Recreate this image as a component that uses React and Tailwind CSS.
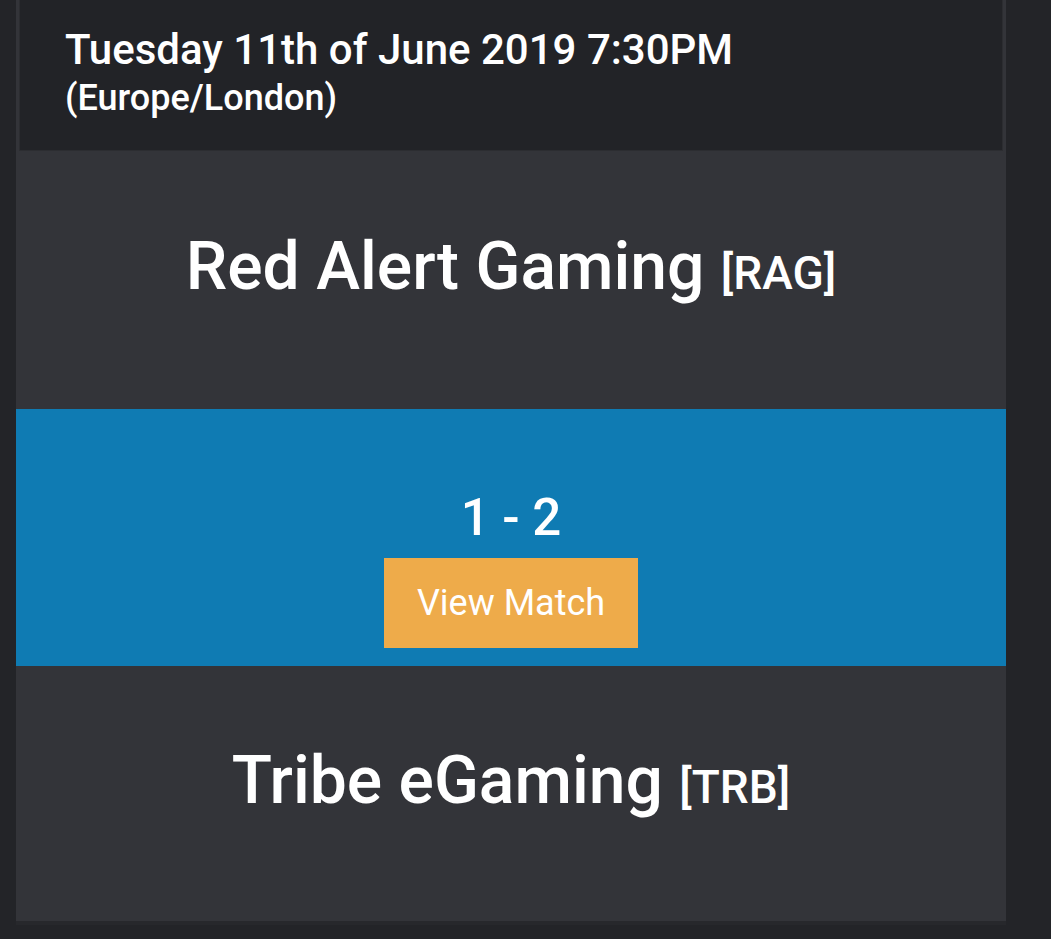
export default function App() {
  return (
    <div className="min-h-[939px] w-[1051px] bg-[#232428] font-['Roboto',sans-serif] text-white">
      <div className="ml-[16px] w-[990px] bg-[#333439] shadow-[0_4px_0_#27282c]">
        <div className="mx-[3px] h-[151px] border border-t-0 border-[#2c2d31] bg-[#222327] pl-[45px] pt-[24px]">
          <div className="text-[42px] font-medium leading-[52px]">Tuesday 11th of June 2019 7:30PM</div>
          <div className="text-[36px] font-medium leading-[44px]">(Europe/London)</div>
        </div>
        <div className="flex h-[258px] items-center justify-center pb-[28px]">
          <div className="text-[66px] font-medium">
            Red Alert Gaming <span className="text-[46px] font-medium">[RAG]</span>
          </div>
        </div>
        <div className="flex h-[257px] flex-col items-center justify-end bg-[#0f7bb3] pb-[18px]">
          <div className="text-[51px] font-medium leading-[60px]">1 - 2</div>
          <button className="mt-[10px] h-[90px] w-[254px] bg-[#eeab4a] text-[36px] text-white">View Match</button>
        </div>
        <div className="flex h-[255px] items-center justify-center pb-[26px]">
          <div className="text-[66px] font-medium">
            Tribe eGaming <span className="text-[46px] font-medium">[TRB]</span>
          </div>
        </div>
      </div>
    </div>
  );
}
